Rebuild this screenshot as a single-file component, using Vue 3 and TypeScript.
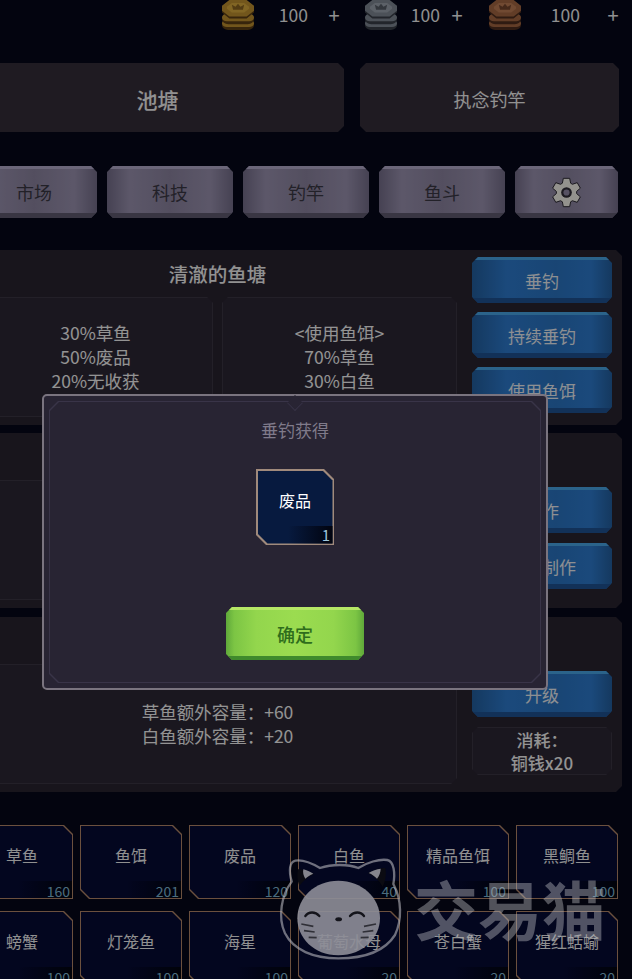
<template>
  <div class="screen">
    <div class="content">
      <div class="topbar">
        <div v-for="coin in coins" :key="coin.name" class="coin-group" :class="coin.name">
          <svg class="coin" viewBox="3 0 26 31" preserveAspectRatio="none">
            <rect x="3" y="20" width="26" height="11" rx="5" :fill="coin.dark" />
            <rect x="3" y="20" width="26" height="8" rx="4" :fill="coin.mid" />
            <rect x="3" y="14" width="26" height="11" rx="5" :fill="coin.dark" />
            <rect x="3" y="14" width="26" height="8" rx="4" :fill="coin.mid" />
            <path d="M9 0h14l6 7v6l-6 6H9l-6-6V7z" :fill="coin.dark" />
            <path d="M9 0h14l6 6v5l-6 6H9l-6-6V6z" :fill="coin.mid" />
            <path d="M11 3h10l4 4v2l-4 4H11L7 9V7z" :fill="coin.light" />
            <path d="M12 10l-1-5 3 2 2-3 2 3 3-2-1 5z" :fill="coin.shade" />
          </svg>
          <span class="num">100</span>
          <span class="plus">+</span>
        </div>
      </div>

      <div class="tabs">
        <div class="tab main cut">池塘</div>
        <div class="tab side cut">执念钓竿</div>
      </div>

      <div class="nav">
        <div v-for="item in navItems" :key="item" class="nav-btn cut">{{ item }}</div>
        <div class="nav-btn cut">
          <svg class="gear" viewBox="0 0 32 32">
            <path :d="gearPath" fill="#f6f4ec" stroke="#26242c" stroke-width="1" stroke-linejoin="round" />
            <circle cx="16" cy="16" r="5.500" fill="#2f2c36" />
            <circle cx="16" cy="16" r="3.200" fill="#8f88a4" />
          </svg>
        </div>
      </div>

      <section class="panel cut">
        <div class="left">
          <h3 class="title">清澈的鱼塘</h3>
          <div class="boxes">
            <div class="box cut">
              <p>30%草鱼</p>
              <p>50%废品</p>
              <p>20%无收获</p>
            </div>
            <div class="box cut">
              <p>&lt;使用鱼饵&gt;</p>
              <p>70%草鱼</p>
              <p>30%白鱼</p>
            </div>
          </div>
        </div>
        <div class="right first">
          <div class="blue-btn cut">垂钓</div>
          <div class="blue-btn cut">持续垂钓</div>
          <div class="blue-btn cut">使用鱼饵</div>
        </div>
      </section>

      <section class="panel cut">
        <div class="left">
          <h3 class="title">鱼饵制作</h3>
          <div class="boxes">
            <div class="box cut">
              <p>消耗：草鱼x1</p>
              <p>获得：鱼饵x1</p>
            </div>
          </div>
        </div>
        <div class="right">
          <div class="blue-btn cut">制作</div>
          <div class="blue-btn cut">批量制作</div>
        </div>
      </section>

      <section class="panel upgrade cut">
        <div class="left">
          <h3 class="title">鱼塘升级</h3>
          <div class="boxes">
            <div class="box cut">
              <p>草鱼额外容量：+60</p>
              <p>白鱼额外容量：+20</p>
            </div>
          </div>
        </div>
        <div class="right">
          <div class="blue-btn cut">升级</div>
          <div class="cost cut">
            <p>消耗：</p>
            <p>铜钱x20</p>
          </div>
        </div>
      </section>

      <div class="items">
        <div v-for="item in items" :key="item.name" class="tile">
          <span class="tile-name">{{ item.name }}</span>
          <span class="tile-count">{{ item.count }}</span>
        </div>
      </div>
    </div>

    <div class="overlay"></div>

    <div class="modal">
      <div class="modal-frame"></div>
      <div class="notch"></div>
      <h2 class="modal-title">垂钓获得</h2>
      <div class="reward">
        <span class="reward-name">废品</span>
        <span class="reward-count">1</span>
      </div>
      <div class="ok-btn cut">确定</div>
    </div>

    <div class="watermark">
      <svg class="cat" viewBox="0 0 480 417">
        <path
          d="M65 125C56 92 58 66 76 62C98 58 126 70 150 84C185 72 235 72 265 84C290 68 328 56 352 60C372 64 376 100 370 132C396 180 396 240 375 285C340 340 270 355 205 355C130 355 70 330 45 280C22 230 35 165 65 125Z"
          fill="none"
          stroke="#b6b6bc"
          stroke-opacity="0.6"
          stroke-width="7"
        />
        <path d="M84 88c18 0 36 8 48 14-18 8-32 20-44 36-6-16-8-34-4-50z" fill="#0b0b12" />
        <path d="M100 88c10 2 20 7 30 13-10 4-17 9-24 15-6-9-8-19-6-28z" fill="#85858d" />
        <path d="M346 84c-18 0-40 8-52 16 18 8 34 22 44 40 8-16 12-38 8-56z" fill="#0b0b12" />
        <path d="M332 86c-12 1-26 7-36 13 10 4 18 10 25 17 7-9 11-20 11-30z" fill="#85858d" />
        <path
          d="M205 122C135 122 82 172 82 235C82 292 130 346 205 346C280 346 330 292 330 235C330 172 275 122 205 122Z"
          fill="#8e8e98"
          fill-opacity="0.9"
        />
        <path d="M106 228c10-14 30-14 42 0" fill="none" stroke="#14141b" stroke-width="7" stroke-linecap="round" />
        <path d="M240 228c12-14 32-14 42 0" fill="none" stroke="#14141b" stroke-width="7" stroke-linecap="round" />
        <ellipse cx="206" cy="238" rx="10" ry="6" fill="#14141b" />
        <path
          d="M94 252l36 7M102 272l32 4M116 292l24 1M318 252l-36 7M310 272l-32 4M296 292l-24 1"
          fill="none"
          stroke="#14141b"
          stroke-opacity="0.75"
          stroke-width="5"
        />
      </svg>
      <span class="wm-text">交易猫</span>
    </div>
  </div>
</template>

<script setup lang="ts">
interface Coin {
  name: string;
  light: string;
  mid: string;
  shade: string;
  dark: string;
}

interface Item {
  name: string;
  count: number;
}

const coins: Coin[] = [
  { name: "gold", light: "#d8a93c", mid: "#bf9030", shade: "#8a6420", dark: "#5c3e14" },
  { name: "silver", light: "#9aa2ad", mid: "#7f8793", shade: "#565c67", dark: "#3a3f48" },
  { name: "copper", light: "#bc7c54", mid: "#a36742", shade: "#74452c", dark: "#4f2e1e" },
];

const navItems = ["市场", "科技", "钓竿", "鱼斗"];

const items: Item[] = [
  { name: "草鱼", count: 160 },
  { name: "鱼饵", count: 201 },
  { name: "废品", count: 120 },
  { name: "白鱼", count: 40 },
  { name: "精品鱼饵", count: 100 },
  { name: "黑鲷鱼", count: 100 },
  { name: "螃蟹", count: 100 },
  { name: "灯笼鱼", count: 100 },
  { name: "海星", count: 100 },
  { name: "葡萄水母", count: 20 },
  { name: "苍白蟹", count: 20 },
  { name: "猩红蛞蝓", count: 20 },
];

// six-toothed cog around the centre of a 32x32 box
const gearPath = Array.from({ length: 6 }, (_, i) => {
  const a = (i * Math.PI) / 3;
  const pt = (r: number, off: number) => {
    const x = 16 + r * Math.sin(a + off);
    const y = 16 - r * Math.cos(a + off);
    return `${x.toFixed(2)} ${y.toFixed(2)}`;
  };
  return `${i ? "L" : "M"}${pt(10.5, -0.42)}L${pt(15, -0.22)}L${pt(15, 0.22)}L${pt(10.5, 0.42)}`;
}).join("") + "Z";
</script>

<style>
html,
body {
  margin: 0;
  background: #050819;
}
</style>

<style scoped>
.screen {
  position: relative;
  width: 632px;
  height: 979px;
  overflow: hidden;
  background: #050819;
  font-family: "Noto Sans CJK SC", "Noto Sans", sans-serif;
  color: #fff;
}

.content {
  width: 652px;
  margin-left: -30px;
}

.cut {
  clip-path: polygon(
    6px 0,
    calc(100% - 6px) 0,
    100% 6px,
    100% calc(100% - 6px),
    calc(100% - 6px) 100%,
    6px 100%,
    0 calc(100% - 6px),
    0 6px
  );
}

.topbar {
  display: flex;
  height: 30px;
  padding-left: 252px;
  align-items: center;
}

.coin-group {
  display: flex;
  height: 30px;
  align-items: flex-start;
  font-size: 17.5px;
  line-height: 30px;
  color: #f0f0f0;
}

.coin {
  width: 32px;
  height: 30px;
  flex: none;
}

.num {
  text-align: right;
}

.plus {
  width: 20px;
  font-size: 20px;
  line-height: 30px;
  text-align: center;
}

.gold .num {
  width: 54px;
}

.gold .plus {
  margin-left: 16px;
}

.silver {
  margin-left: 21px;
}

.silver .num {
  width: 43px;
}

.silver .plus {
  margin-left: 7px;
}

.copper {
  margin-left: 22px;
}

.copper .num {
  width: 59px;
}

.copper .plus {
  margin-left: 23px;
}

.tabs {
  display: flex;
  gap: 16px;
  margin-top: 33px;
  padding-left: 1px;
}

.tab {
  display: flex;
  height: 69px;
  box-sizing: border-box;
  padding-top: 3px;
  align-items: center;
  justify-content: center;
  background: #352d39;
  color: #f2f2f2;
}

.tab.main {
  width: 373px;
  font-size: 21px;
  font-weight: 500;
}

.tab.side {
  width: 259px;
  font-size: 18px;
}

.nav {
  display: grid;
  grid-template-columns: repeat(4, 126px) 103px;
  gap: 10px;
  margin-top: 34px;
  padding-left: 1px;
}

.nav-btn {
  display: flex;
  height: 52px;
  align-items: center;
  justify-content: center;
  font-size: 18px;
  color: #3a3744;
  background: linear-gradient(90deg, #756e8a 0, #9a92b0 18%, #8b839f 50%, #9a92b0 82%, #756e8a 100%);
  box-shadow: inset 0 3px 0 #b2aaca, inset 0 -5px 0 #5f5a70;
}

.gear {
  width: 31px;
  height: 31px;
}

.panel {
  display: flex;
  height: 175px;
  box-sizing: border-box;
  margin-top: 8px;
  padding: 0 10px 8px 8px;
  background: #282330;
}

.tabs + .nav + .panel {
  margin-top: 32px;
}

.panel.upgrade {
  margin-top: 9px;
}

.left {
  display: flex;
  width: 479px;
  flex-direction: column;
}

.title {
  height: 47px;
  margin: 0;
  font-size: 19.5px;
  font-weight: 500;
  line-height: 47px;
  text-align: center;
  color: #f2f2f2;
}

.boxes {
  display: flex;
  flex: 1;
  gap: 9px;
}

.box {
  display: flex;
  flex: 1;
  flex-direction: column;
  align-items: center;
  justify-content: center;
  background: #2c2735;
  box-shadow: inset 0 0 0 1px #3b3644;
  font-size: 17.5px;
  line-height: 24px;
  color: #f6f6f6;
}

.box p,
.cost p {
  margin: 0;
}

.right {
  display: flex;
  width: 140px;
  flex-direction: column;
  gap: 10px;
  margin-left: 15px;
  padding-top: 54px;
}

.right.first {
  gap: 9px;
  padding-top: 7px;
}

.blue-btn {
  display: flex;
  height: 46px;
  flex: none;
  align-items: center;
  justify-content: center;
  font-size: 17px;
  color: #eceff4;
  background: linear-gradient(90deg, #235f9f 0, #2d7bcf 25%, #2a74c2 60%, #2d7bcf 85%, #235f9f 100%);
  box-shadow: inset 0 3px 0 #49a5e6, inset 0 -5px 0 #1e5393;
}

.cost {
  display: flex;
  height: 48px;
  flex: none;
  flex-direction: column;
  align-items: center;
  justify-content: center;
  background: #2c2735;
  box-shadow: inset 0 0 0 1px #3b3644;
  font-size: 17px;
  font-weight: 500;
  line-height: 23px;
  color: #f6f6f6;
}

.items {
  display: grid;
  grid-template-columns: repeat(6, 102px);
  gap: 12px 7px;
  margin-top: 33px;
  padding-left: 1px;
}

.tile {
  position: relative;
  display: flex;
  height: 74px;
  justify-content: center;
  padding-top: 18px;
  box-sizing: border-box;
  font-size: 16px;
  color: #f0f0f0;
  background: #b28568;
  clip-path: polygon(0 0, calc(100% - 9px) 0, 100% 9px, 100% 100%, 9px 100%, 0 calc(100% - 9px));
}

.tile::before {
  content: "";
  position: absolute;
  inset: 1px;
  background: linear-gradient(270deg, #020410 0, transparent 55%) bottom / 100% 17px no-repeat, #050a35;
  clip-path: polygon(0 0, calc(100% - 9px) 0, 100% 9px, 100% 100%, 9px 100%, 0 calc(100% - 9px));
}

.tile-name {
  position: relative;
}

.tile-count {
  position: absolute;
  right: 3px;
  bottom: -1px;
  font-size: 14px;
  line-height: 18px;
  color: #7fb6d2;
}

.overlay {
  position: absolute;
  inset: 0;
  background: rgba(0, 0, 0, 0.4);
}

.modal {
  position: absolute;
  top: 394px;
  left: 42px;
  display: flex;
  width: 506px;
  height: 296px;
  box-sizing: border-box;
  flex-direction: column;
  align-items: center;
  border: 2px solid #7a747f;
  border-radius: 5px;
  background: #282433;
}

.modal-frame {
  position: absolute;
  inset: 5px;
  background: #393448;
  clip-path: polygon(
    9px 0,
    calc(100% - 9px) 0,
    100% 9px,
    100% calc(100% - 9px),
    calc(100% - 9px) 100%,
    9px 100%,
    0 calc(100% - 9px),
    0 9px
  );
}

.modal-frame::before {
  content: "";
  position: absolute;
  inset: 1px;
  background: #282433;
  clip-path: polygon(
    9px 0,
    calc(100% - 9px) 0,
    100% 9px,
    100% calc(100% - 9px),
    calc(100% - 9px) 100%,
    9px 100%,
    0 calc(100% - 9px),
    0 9px
  );
}

.notch {
  position: absolute;
  top: 0;
  left: 244px;
  width: 14px;
  height: 14px;
  box-sizing: border-box;
  border-right: 1px solid #393448;
  border-bottom: 1px solid #393448;
  background: #282433;
  transform: rotate(45deg) scale(0.8);
}

.modal-title {
  position: relative;
  margin: 21px 0 0;
  font-size: 17px;
  font-weight: 400;
  line-height: 26px;
  color: #7f7a8a;
}

.reward {
  position: relative;
  display: flex;
  width: 78px;
  height: 76px;
  box-sizing: border-box;
  flex: none;
  margin-top: 26px;
  align-items: center;
  justify-content: center;
  background: #a08a7c;
  clip-path: polygon(0 0, calc(100% - 10px) 0, 100% 10px, 100% 100%, 10px 100%, 0 calc(100% - 10px));
  font-size: 16px;
}

.reward::before {
  content: "";
  position: absolute;
  inset: 1.5px;
  background: linear-gradient(270deg, #01030e 0, transparent 60%) bottom / 100% 18px no-repeat, #071a3f;
  clip-path: polygon(0 0, calc(100% - 10px) 0, 100% 10px, 100% 100%, 10px 100%, 0 calc(100% - 10px));
}

.reward-name {
  position: relative;
  margin-bottom: 14px;
}

.reward-count {
  position: absolute;
  right: 4px;
  bottom: 0;
  font-size: 15px;
  line-height: 20px;
  color: #9ec6dc;
}

.ok-btn {
  display: flex;
  width: 138px;
  height: 53px;
  flex: none;
  margin-top: 62px;
  align-items: center;
  justify-content: center;
  font-size: 18px;
  font-weight: 500;
  color: #2f6d1c;
  background: linear-gradient(90deg, #5fa83a 0, #7cc544 6%, #93d64d 22%, #9bdc50 50%, #93d64d 78%, #7cc544 94%, #5fa83a 100%);
  box-shadow: inset 0 3px 0 #b6e866, inset 0 -4px 0 #3f8a2c;
}

.watermark {
  position: absolute;
  top: 840px;
  left: 270px;
  display: flex;
  width: 362px;
  pointer-events: none;
}

.cat {
  width: 160px;
  height: 139px;
  flex: none;
}

.wm-text {
  position: absolute;
  top: 27px;
  left: 144px;
  font-size: 64px;
  font-weight: 700;
  line-height: 80px;
  white-space: nowrap;
  color: rgba(190, 190, 196, 0.42);
}
</style>
